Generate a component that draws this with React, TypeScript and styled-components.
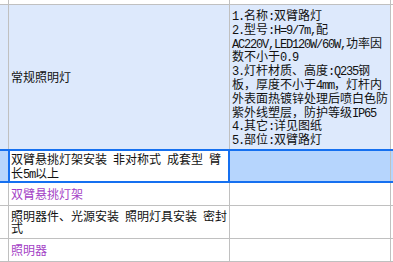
import React from 'react';
import styled, { createGlobalStyle, css } from 'styled-components';

const GRID = '#c0c0c0';
const BLUE = '#1570f0';
const ROW_TINT = '#dde9fc';
const SELECT_TINT = '#b6d5fd';

const GlobalStyle = createGlobalStyle`
  html, body {
    margin: 0;
    padding: 0;
    background: #ffffff;
  }
  body {
    font-family: "Noto Sans CJK SC", "Noto Sans", sans-serif;
    font-size: 12px;
    color: #111111;
    overflow: hidden;
  }
`;

/**
 * Sheet layout
 */
const Sheet = styled.div`
  display: flex;
  flex-direction: column;
  width: 393px;
  height: 262px;
  overflow: hidden;
`;

interface RowProps {
  $height: number;
  $selected?: boolean;
}

const Row = styled.div<RowProps>`
  box-sizing: border-box;
  display: grid;
  grid-template-columns: ${(p) => (p.$selected ? '8px 222px 161px 1fr' : '9px 221px 161px 1fr')};
  height: ${(p) => p.$height}px;
  flex: none;
  ${(p) =>
    p.$selected
      ? css`
          margin-top: -1px;
          border-top: 2px solid ${BLUE};
          border-bottom: 2px solid ${BLUE};
        `
      : css`
          border-bottom: 1px solid ${GRID};
        `}
`;

interface CellProps {
  $bg?: string;
  $active?: boolean;
  $grid?: boolean;
}

const Cell = styled.div<CellProps>`
  box-sizing: border-box;
  display: flex;
  align-items: center;
  min-width: 0;
  overflow: hidden;
  background: ${(p) => p.$bg ?? '#ffffff'};
  border-right: ${(p) => (p.$grid ? `1px solid ${GRID}` : 'none')};
  ${(p) =>
    p.$active &&
    css`
      border-left: 2px solid ${BLUE};
      border-right: 2px solid ${BLUE};
    `}
`;

interface TextProps {
  $purple?: boolean;
  $inset?: number;
}

const CellText = styled.div<TextProps>`
  padding-left: ${(p) => p.$inset ?? 2}px;
  white-space: pre;
  color: ${(p) => (p.$purple ? '#a43fc6' : '#111111')};
`;

const Line = styled.div<{ $pitch: number }>`
  height: ${(p) => p.$pitch}px;
  line-height: ${(p) => p.$pitch}px;
`;

// half-width run, 6px per character like a bitmap song face
const Latin = styled.span`
  font-family: "Liberation Mono", "DejaVu Sans Mono", monospace;
  font-size: 12px;
  letter-spacing: -1.2px;
  line-height: 0;
`;

const Mixed = ({ text }: { text: string }) => (
  <>
    {text.split(/([\x20-\x7e]+)/).map((part, i) =>
      /^[\x20-\x7e]+$/.test(part) ? <Latin key={i}>{part}</Latin> : part
    )}
  </>
);

const Lines = ({ lines, pitch = 14 }: { lines: string[]; pitch?: number }) => (
  <>
    {lines.map((line, i) => (
      <Line key={i} $pitch={pitch}>
        <Mixed text={line} />
      </Line>
    ))}
  </>
);

const specLines = [
  '1.名称:双臂路灯',
  '2.型号:H=9/7m,配',
  'AC220V,LED120W/60W,功率因',
  '数不小于0.9',
  '3.灯杆材质、高度:Q235钢',
  '板，厚度不小于4mm，灯杆内',
  '外表面热镀锌处理后喷白色防',
  '紫外线塑层，防护等级IP65',
  '4.其它:详见图纸',
  '5.部位:双臂路灯',
];

export default function App() {
  return (
    <>
      <GlobalStyle />
      <Sheet>
        <Row $height={5}>
          <Cell $grid />
          <Cell $grid />
          <Cell $grid />
          <Cell />
        </Row>

        <Row $height={145}>
          <Cell $grid $bg={ROW_TINT} />
          <Cell $grid $bg={ROW_TINT}>
            <CellText>
              <Lines lines={['常规照明灯']} />
            </CellText>
          </Cell>
          <Cell $grid $bg={ROW_TINT}>
            <CellText>
              <Lines lines={specLines} pitch={13.8} />
            </CellText>
          </Cell>
          <Cell />
        </Row>

        <Row $height={34} $selected>
          <Cell $bg={SELECT_TINT} />
          <Cell $active>
            <CellText $inset={1}>
              <Lines lines={['双臂悬挑灯架安装 非对称式 成套型 臂', '长5m以上']} />
            </CellText>
          </Cell>
          <Cell $bg={SELECT_TINT} $grid />
          <Cell $bg={SELECT_TINT} />
        </Row>

        <Row $height={23}>
          <Cell $grid />
          <Cell $grid>
            <CellText $purple>
              <Lines lines={['双臂悬挑灯架']} />
            </CellText>
          </Cell>
          <Cell $grid />
          <Cell />
        </Row>

        <Row $height={33}>
          <Cell $grid />
          <Cell $grid>
            <CellText>
              <Lines lines={['照明器件、光源安装 照明灯具安装 密封', '式']} pitch={12} />
            </CellText>
          </Cell>
          <Cell $grid />
          <Cell />
        </Row>

        <Row $height={23}>
          <Cell $grid />
          <Cell $grid>
            <CellText $purple>
              <Lines lines={['照明器']} />
            </CellText>
          </Cell>
          <Cell $grid />
          <Cell />
        </Row>
      </Sheet>
    </>
  );
}
